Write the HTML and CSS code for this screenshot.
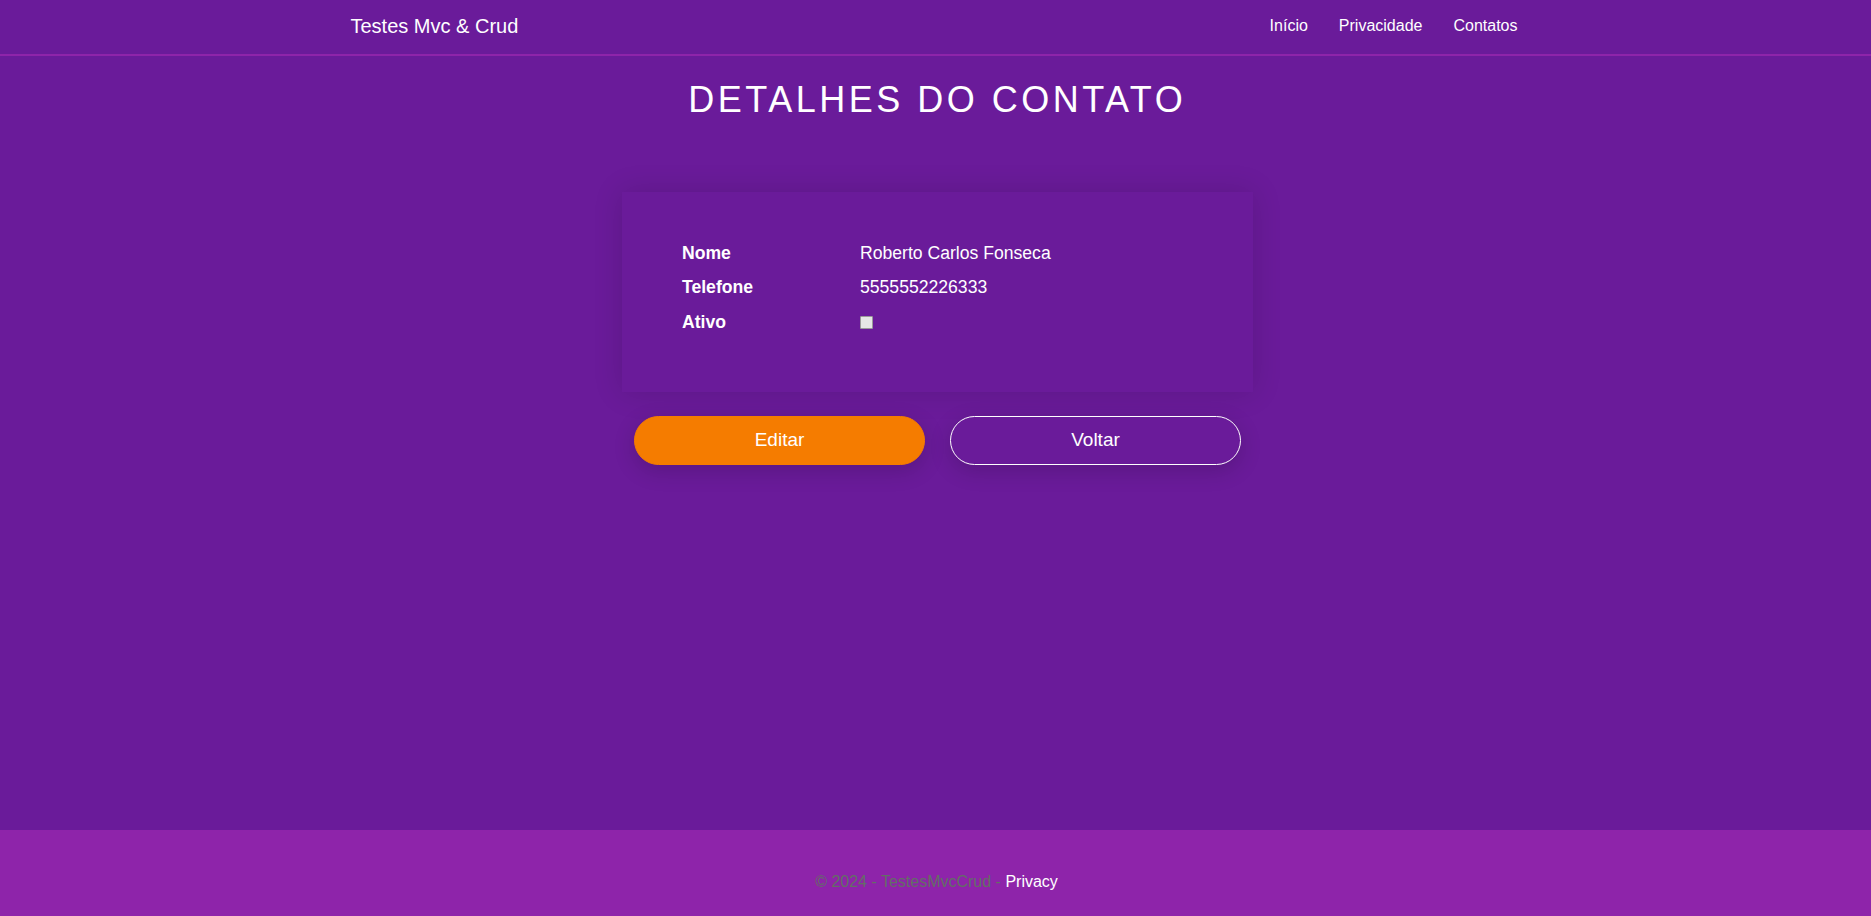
FILE: index.html
```html
<!DOCTYPE html>
<html lang="pt-BR">
<head>
<meta charset="utf-8">
<title>Detalhes do Contato - Testes Mvc &amp; Crud</title>
<link rel="stylesheet" href="styles.css">
</head>
<body>
<header class="topbar">
  <div class="topbar-inner">
    <a class="brand" href="#">Testes Mvc &amp; Crud</a>
    <nav class="nav">
      <a class="nav-link" href="#">Início</a>
      <a class="nav-link" href="#">Privacidade</a>
      <a class="nav-link" href="#">Contatos</a>
    </nav>
  </div>
</header>

<main class="main">
  <h1 class="page-title">DETALHES DO CONTATO</h1>

  <section class="details">
    <div class="card">
      <dl class="info">
        <dt class="info-label">Nome</dt>
        <dd class="info-value">Roberto Carlos Fonseca</dd>
        <dt class="info-label">Telefone</dt>
        <dd class="info-value">5555552226333</dd>
        <dt class="info-label">Ativo</dt>
        <dd class="info-value"><input class="check" type="checkbox" disabled></dd>
      </dl>
    </div>
    <div class="actions">
      <a class="btn btn-primary" href="#">Editar</a>
      <a class="btn btn-outline" href="#">Voltar</a>
    </div>
  </section>
</main>

<footer class="footer">
  <span class="footer-text">© 2024 - TestesMvcCrud - <a class="footer-link" href="#">Privacy</a></span>
</footer>
</body>
</html>
```

FILE: styles.css
```css
* { box-sizing: border-box; }

html, body {
  margin: 0;
  padding: 0;
}

body {
  min-height: 100vh;
  display: flex;
  flex-direction: column;
  background: #6a1b9a;
  color: #ffffff;
  font-family: "Liberation Sans", Arial, sans-serif;
  font-size: 16px;
  line-height: 1.5;
}

a { text-decoration: none; color: inherit; }

/* Header */
.topbar {
  height: 56px;
  border-bottom: 2px solid #8e24aa;
}

.topbar-inner {
  width: 1170px;
  height: 54px;
  margin: 0 auto;
  display: flex;
  align-items: center;
  justify-content: space-between;
  padding-bottom: 2px;
}

.brand {
  font-size: 20px;
  line-height: 30px;
  color: #ffffff;
}

.nav {
  display: flex;
  gap: 31px;
  margin-right: 3px;
}

.nav-link {
  font-size: 16px;
  line-height: 24px;
  color: #ffffff;
}

/* Main */
.main {
  flex: 1;
  display: flex;
  flex-direction: column;
  align-items: center;
}

.page-title {
  margin: 22px 0 0 0;
  font-size: 36px;
  line-height: 43px;
  font-weight: 400;
  letter-spacing: 3.5px;
  text-indent: 3.5px;
  color: #ffffff;
}

.details {
  width: 631px;
  margin-top: 71px;
  margin-left: 4px;
}

.card {
  background: #6a1b9a;
  padding: 48px 48px 57px 60px;
  box-shadow: 0 0 28px rgba(0, 0, 0, 0.14);
}

.info {
  margin: 0;
  display: grid;
  grid-template-columns: 178px 1fr;
  row-gap: 8px;
  font-size: 17.6px;
  line-height: 26.4px;
}

.info-label {
  font-weight: 700;
}

.info-value {
  margin: 0;
  display: flex;
  align-items: center;
}

.check {
  appearance: none;
  -webkit-appearance: none;
  width: 13px;
  height: 13px;
  margin: 0;
  background: #e6e6e6;
  border: 1px solid #9a9a9a;
  border-radius: 1px;
}

.actions {
  display: flex;
  gap: 25px;
  padding: 0 12px;
  margin-top: 24px;
}

.btn {
  flex: 1;
  display: flex;
  align-items: center;
  justify-content: center;
  height: 49px;
  border-radius: 25px;
  font-size: 19px;
  color: #ffffff;
  box-shadow: 0 6px 22px rgba(0, 0, 0, 0.16);
}

.btn-primary {
  background: #f57c00;
  border: 1px solid #f57c00;
}

.btn-outline {
  background: #6a1b9a;
  border: 1px solid #ffffff;
}

/* Footer */
.footer {
  height: 86px;
  background: #8e24aa;
  display: flex;
  justify-content: center;
  padding-top: 40px;
}

.footer-text {
  font-size: 16px;
  line-height: 24px;
  color: #636e66;
  margin-left: 2px;
}

.footer-link {
  color: #ffffff;
}
```
